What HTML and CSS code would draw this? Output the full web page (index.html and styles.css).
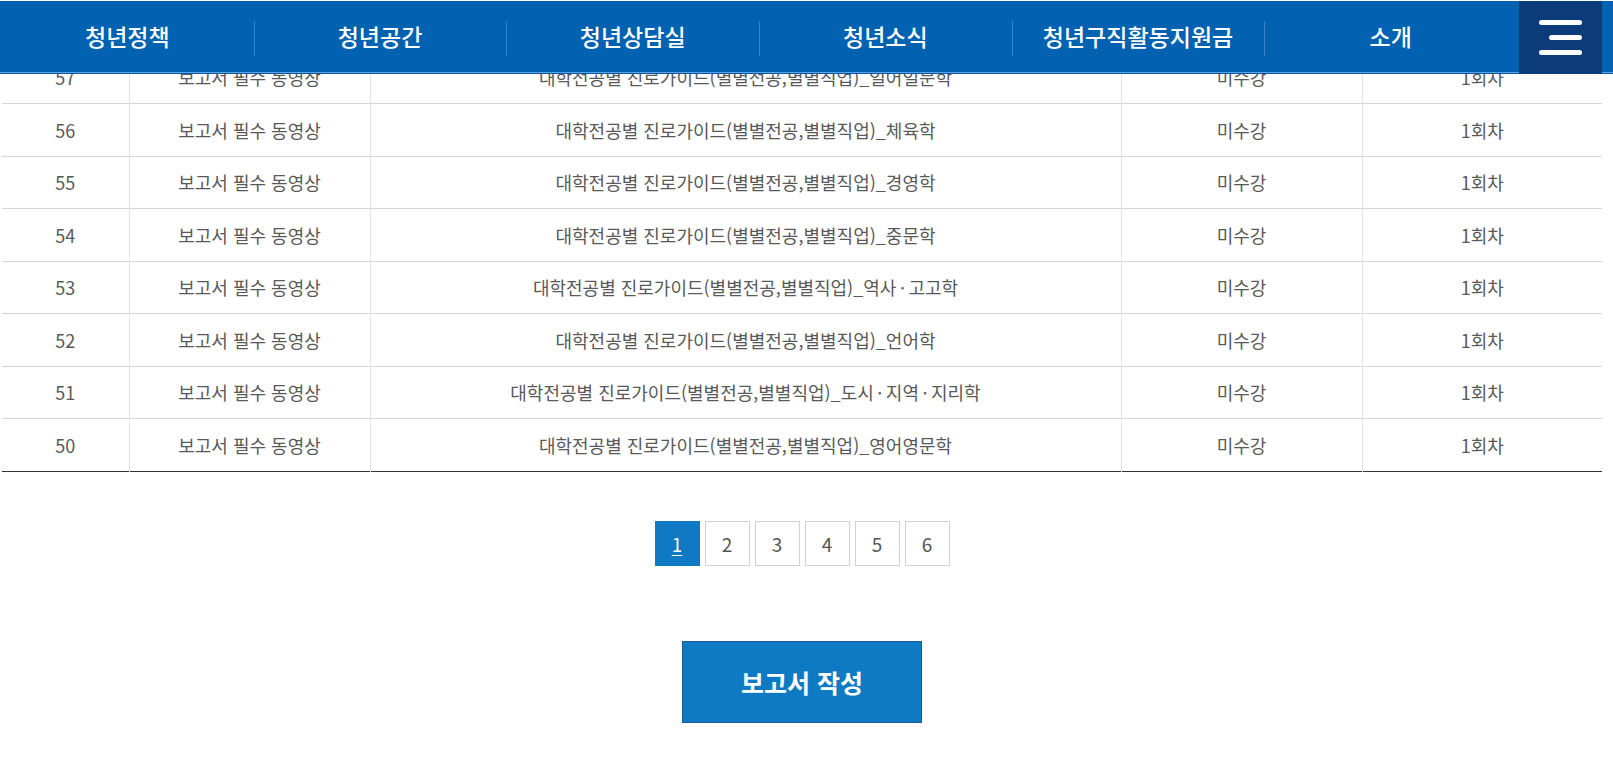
FILE: index.html
```html
<!DOCTYPE html>
<html lang="ko">
<head>
    <meta charset="UTF-8">
    <meta name="viewport" content="width=device-width, initial-scale=1.0">
    <title>보고서 필수 동영상</title>
    <link rel="stylesheet" href="styles.css">
</head>
<body>
    <header class="gnb">
        <ul class="gnb-menu">
            <li><a href="#">청년정책</a></li>
            <li><a href="#">청년공간</a></li>
            <li><a href="#">청년상담실</a></li>
            <li><a href="#">청년소식</a></li>
            <li><a href="#">청년구직활동지원금</a></li>
            <li><a href="#">소개</a></li>
        </ul>
        <button class="gnb-all" aria-label="전체메뉴">
            <span class="bar"></span>
            <span class="bar short"></span>
            <span class="bar"></span>
        </button>
    </header>

    <main class="content">
        <table class="list">
            <colgroup>
                <col class="c-num">
                <col class="c-type">
                <col class="c-title">
                <col class="c-state">
                <col class="c-round">
            </colgroup>
            <tbody>
                <tr><td>57</td><td>보고서 필수 동영상</td><td>대학전공별 진로가이드(별별전공,별별직업)_일어일문학</td><td>미수강</td><td>1회차</td></tr>
                <tr><td>56</td><td>보고서 필수 동영상</td><td>대학전공별 진로가이드(별별전공,별별직업)_체육학</td><td>미수강</td><td>1회차</td></tr>
                <tr><td>55</td><td>보고서 필수 동영상</td><td>대학전공별 진로가이드(별별전공,별별직업)_경영학</td><td>미수강</td><td>1회차</td></tr>
                <tr><td>54</td><td>보고서 필수 동영상</td><td>대학전공별 진로가이드(별별전공,별별직업)_중문학</td><td>미수강</td><td>1회차</td></tr>
                <tr><td>53</td><td>보고서 필수 동영상</td><td>대학전공별 진로가이드(별별전공,별별직업)_역사<span class="dot">·</span>고고학</td><td>미수강</td><td>1회차</td></tr>
                <tr><td>52</td><td>보고서 필수 동영상</td><td>대학전공별 진로가이드(별별전공,별별직업)_언어학</td><td>미수강</td><td>1회차</td></tr>
                <tr><td>51</td><td>보고서 필수 동영상</td><td>대학전공별 진로가이드(별별전공,별별직업)_도시<span class="dot">·</span>지역<span class="dot">·</span>지리학</td><td>미수강</td><td>1회차</td></tr>
                <tr><td>50</td><td>보고서 필수 동영상</td><td>대학전공별 진로가이드(별별전공,별별직업)_영어영문학</td><td>미수강</td><td>1회차</td></tr>
            </tbody>
        </table>

        <div class="paging">
            <a href="#" class="on">1</a>
            <a href="#">2</a>
            <a href="#">3</a>
            <a href="#">4</a>
            <a href="#">5</a>
            <a href="#">6</a>
        </div>

        <div class="btn-area">
            <a href="#" class="btn-write">보고서 작성</a>
        </div>
    </main>
</body>
</html>
```

FILE: styles.css
```css
body {
    margin: 0;
    font-family: "Noto Sans CJK KR", "Noto Sans", sans-serif;
    color: #555;
    background-color: #fff;
}
a {
    text-decoration: none;
    color: inherit;
}

/* top menu */
.gnb {
    position: fixed;
    top: 1px;
    left: 0;
    right: 0;
    z-index: 10;
    display: flex;
    height: 72px;
    padding-left: 1px;
    background-color: #0062b1;
    border-bottom: 1px solid #0a57a6;
    box-shadow: inset 0 -1px 0 #5aa2e2;
}
.gnb-menu {
    display: flex;
    width: 1516px;
    margin: 0;
    padding: 0;
    list-style: none;
}
.gnb-menu li {
    position: relative;
    flex: 1;
    display: flex;
    align-items: center;
    justify-content: center;
}
.gnb-menu li + li::before {
    content: "";
    position: absolute;
    left: 0;
    top: 20px;
    height: 35px;
    width: 1px;
    background-color: #3a83c4;
}
.gnb-menu a {
    color: #fff;
    font-size: 23px;
    font-weight: 500;
    padding-bottom: 3px;
}
.gnb-all {
    align-self: flex-start;
    width: 83px;
    height: 73px;
    margin-left: 2px;
    padding: 0;
    border: none;
    background-color: #0b3b78;
    display: flex;
    flex-direction: column;
    align-items: flex-end;
    justify-content: center;
    gap: 10px;
    padding-right: 20px;
    cursor: pointer;
}
.gnb-all .bar {
    display: block;
    width: 43px;
    height: 5px;
    border-radius: 3px;
    background-color: #fff;
}
.gnb-all .bar.short {
    width: 33px;
}

/* list */
.content {
    padding: 51px 11px 34px 2px;
}
.list {
    width: 1600px;
    border-collapse: collapse;
    table-layout: fixed;
    border-bottom: 1px solid #333;
}
.c-num { width: 127px; }
.c-type { width: 241px; }
.c-title { width: 751px; }
.c-state { width: 241px; }
.c-round { width: 240px; }
.list tr {
    height: 52.5px;
    border-bottom: 1px solid #d6d6d6;
}
.list tr:last-child {
    border-bottom: 1px solid #333;
}
.list td {
    padding: 0;
    text-align: center;
    font-size: 18px;
    color: #595959;
    border-left: 1px solid #e2e2ea;
}
.list td:first-child {
    border-left: none;
}
.list .dot {
    margin: 0 3.5px;
}

/* paging */
.paging {
    display: flex;
    justify-content: center;
    gap: 5px;
    margin-top: 49px;
}
.paging a {
    box-sizing: border-box;
    width: 45px;
    height: 45px;
    border: 1px solid #d2d2d2;
    display: flex;
    align-items: center;
    justify-content: center;
    font-size: 19px;
    color: #555;
}
.paging a.on {
    background-color: #0f79c3;
    border-color: #0f79c3;
    color: #fff;
    text-decoration: underline;
    text-underline-offset: 3px;
}

/* button */
.btn-area {
    display: flex;
    justify-content: center;
    margin-top: 75px;
}
.btn-write {
    box-sizing: border-box;
    width: 240px;
    height: 82px;
    display: flex;
    align-items: center;
    justify-content: center;
    background-color: #0f7ac4;
    border: 1px solid #1c5a9b;
    color: #fff;
    font-size: 25px;
    font-weight: 700;
}
```
